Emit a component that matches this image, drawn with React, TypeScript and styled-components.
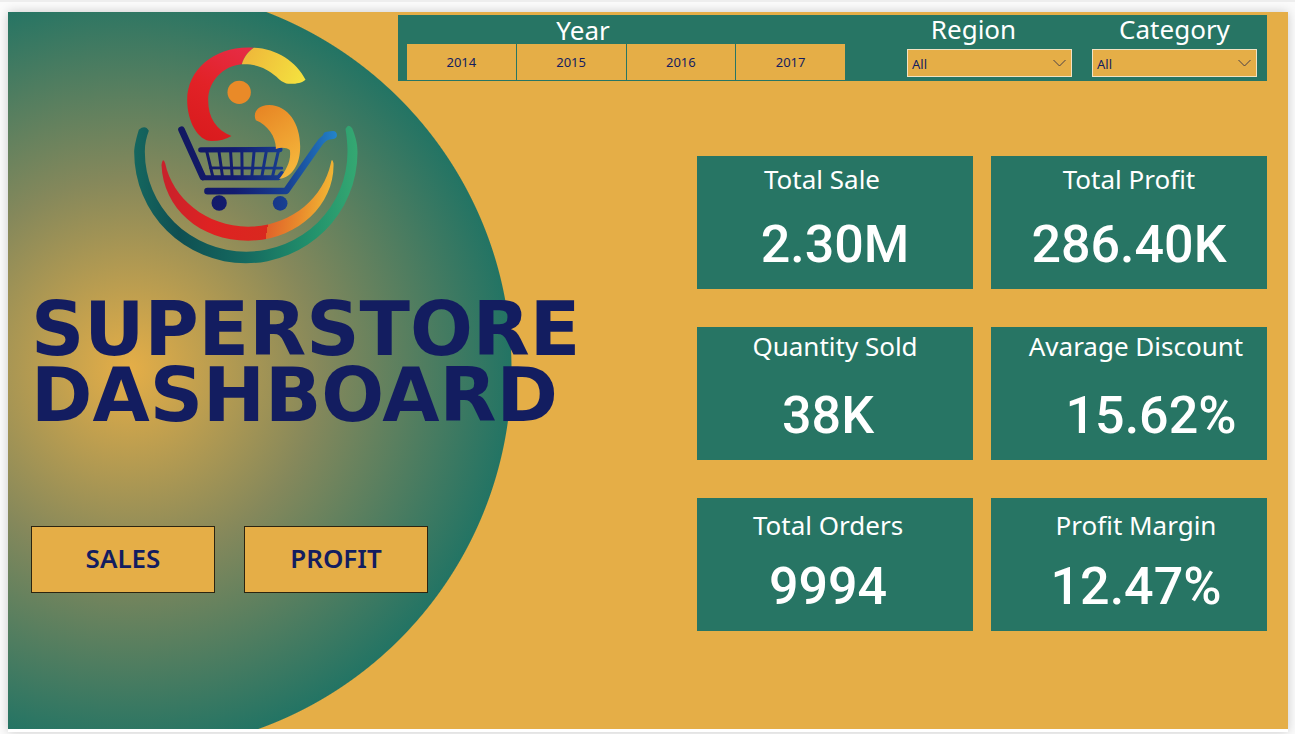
import React, { useState } from "react";
import styled, { createGlobalStyle } from "styled-components";

const amber = "#e5ae47";
const green = "#277564";
const navy = "#131d60";

const GlobalStyle = createGlobalStyle`
  *, *::before, *::after { box-sizing: border-box; }
  body {
    margin: 0;
    background: #fbfbfb;
    font-family: "Noto Sans", "Open Sans", sans-serif;
  }
`;

const Page = styled.div`
  display: flex;
  flex-direction: column;
  min-height: 100vh;
  padding: 10px 7px 2px 8px;
  border-top: 2px solid #eeeeee;
`;

const Report = styled.main`
  flex: 1;
  display: flex;
  padding-bottom: 3px;
  background: #ffffff;
  box-shadow: 0 0 10px rgba(0, 0, 0, 0.2);
`;

const Canvas = styled.div`
  flex: 1;
  display: grid;
  grid-template-columns: 390fr 299fr 570fr;
  grid-template-rows: auto 1fr;
  padding: 3px 21px 0 0;
  background: radial-gradient(
    circle at 121px 357px,
    ${amber} 0,
    #85885b 191px,
    #237464 382px,
    ${amber} 383px
  );
`;

const FilterBar = styled.header`
  grid-column: 2 / 4;
  grid-row: 1;
  display: flex;
  gap: 20px;
  height: 66px;
  padding: 0 10px 0 9px;
  background: ${green};
`;

const YearSlicer = styled.div`
  flex: 0 1 438px;
  display: flex;
  flex-direction: column;
  justify-content: flex-end;
  margin-right: auto;
  padding-bottom: 1px;
`;

const FilterLabel = styled.label`
  font-size: 26px;
  line-height: 28px;
  text-align: center;
  color: #ffffff;
`;

const YearLabel = styled(FilterLabel).attrs({ as: "span" })`
  padding-right: 86px;
`;

const YearList = styled.div`
  display: grid;
  grid-template-columns: repeat(4, 1fr);
  gap: 1px;
`;

const YearButton = styled.button`
  height: 36px;
  padding: 0;
  border: 0;
  background: ${amber};
  color: ${navy};
  font: 13px "Noto Sans", sans-serif;
  cursor: pointer;
`;

const DropdownFilter = styled.div`
  flex: 0 1 165px;
  display: flex;
  flex-direction: column;
  gap: 6px;
`;

const RegionLabel = styled(FilterLabel)`
  padding-right: 32px;
`;

const SelectBox = styled.div`
  position: relative;
  display: flex;
`;

const Select = styled.select`
  flex: 1;
  height: 28px;
  padding: 2px 24px 0 4px;
  border: 1px solid #f3e3c2;
  border-radius: 0;
  appearance: none;
  background: ${amber};
  color: ${navy};
  font: 13px "Noto Sans", sans-serif;
`;

const Chevron = styled.svg`
  position: absolute;
  top: 10px;
  right: 6px;
  width: 13px;
  height: 8px;
  pointer-events: none;
`;

const Hero = styled.section`
  grid-column: 1 / 3;
  grid-row: 1 / 3;
  display: flex;
  flex-direction: column;
  align-items: flex-start;
  padding: 30px 0 0 23px;
`;

const Logo = styled.svg`
  width: 227px;
  height: 220px;
  margin-left: 102px;
`;

const Title = styled.h1`
  margin: 31px 0 0;
  font: bold 74px/66px "DejaVu Sans", sans-serif;
  color: ${navy};
`;

const PageNav = styled.nav`
  display: flex;
  gap: 29px;
  margin-top: 98px;
`;

const NavButton = styled.button`
  width: 184px;
  height: 67px;
  padding: 0 0 4px;
  border: 1px solid #2b2410;
  background: ${amber};
  color: ${navy};
  font: 600 26px "Noto Sans", sans-serif;
  cursor: pointer;
`;

const Cards = styled.section`
  grid-column: 3;
  grid-row: 2;
  align-content: start;
  display: grid;
  grid-template-columns: 1fr 1fr;
  grid-auto-rows: minmax(133px, auto);
  gap: 38px 18px;
  padding-top: 75px;
`;

const Card = styled.article<{ $top: number }>`
  display: flex;
  flex-direction: column;
  justify-content: space-between;
  padding: ${(p) => p.$top}px 0 14px;
  background: ${green};
  color: #ffffff;
  text-align: center;
  white-space: nowrap;
`;

/* A positive lean moves the centred text right, a negative one left. */
const leanPadding = (lean: number) =>
  lean < 0 ? `0 ${-lean}px 0 0` : `0 0 0 ${lean}px`;

const CardTitle = styled.h2<{ $lean: number }>`
  margin: 0;
  padding: ${(p) => leanPadding(p.$lean)};
  font-size: 26px;
  font-weight: 400;
  line-height: 32px;
`;

const CardValue = styled.p<{ $lean: number }>`
  margin: 0;
  padding: ${(p) => leanPadding(p.$lean)};
  font: 500 52px/60px Roboto, sans-serif;
`;

const years = ["2014", "2015", "2016", "2017"];
const regions = ["All", "Central", "East", "South", "West"];
const categories = ["All", "Furniture", "Office Supplies", "Technology"];

const metrics = [
  { title: "Total Sale", value: "2.30M", top: 7, titleLean: -26, valueLean: 0 },
  { title: "Total Profit", value: "286.40K", top: 7, titleLean: 0, valueLean: 0 },
  { title: "Quantity Sold", value: "38K", top: 3, titleLean: 0, valueLean: -14 },
  { title: "Avarage Discount", value: "15.62%", top: 3, titleLean: 14, valueLean: 44 },
  { title: "Total Orders", value: "9994", top: 11, titleLean: -14, valueLean: -14 },
  { title: "Profit Margin", value: "12.47%", top: 11, titleLean: 14, valueLean: 14 },
];

function CartLogo() {
  return (
    <Logo viewBox="40 30 680 660" role="img" aria-label="Superstore logo">
      <defs>
        <linearGradient id="ring" gradientUnits="userSpaceOnUse" x1="43" y1="0" x2="713" y2="0">
          <stop offset="0" stopColor="#15675f" />
          <stop offset="0.2" stopColor="#0f4f52" />
          <stop offset="0.5" stopColor="#156a60" />
          <stop offset="0.8" stopColor="#22926c" />
          <stop offset="1" stopColor="#35a872" />
        </linearGradient>
        <linearGradient id="smile" gradientUnits="userSpaceOnUse" x1="125" y1="480" x2="641" y2="560">
          <stop offset="0" stopColor="#c9222b" />
          <stop offset="0.3" stopColor="#de2222" />
          <stop offset="0.63" stopColor="#d9281f" />
          <stop offset="0.63" stopColor="#e0632a" />
          <stop offset="0.8" stopColor="#e98a2c" />
          <stop offset="1" stopColor="#f3c136" />
        </linearGradient>
        <linearGradient id="red" gradientUnits="userSpaceOnUse" x1="380" y1="40" x2="240" y2="310">
          <stop offset="0" stopColor="#e62c45" />
          <stop offset="0.5" stopColor="#e22227" />
          <stop offset="1" stopColor="#d91b1d" />
        </linearGradient>
        <linearGradient id="yellow" gradientUnits="userSpaceOnUse" x1="370" y1="50" x2="550" y2="140">
          <stop offset="0" stopColor="#eeb63a" />
          <stop offset="1" stopColor="#f4e23f" />
        </linearGradient>
        <linearGradient id="orange" gradientUnits="userSpaceOnUse" x1="410" y1="220" x2="540" y2="400">
          <stop offset="0" stopColor="#e78524" />
          <stop offset="1" stopColor="#f5b83c" />
        </linearGradient>
        <linearGradient id="cart" gradientUnits="userSpaceOnUse" x1="180" y1="0" x2="650" y2="0">
          <stop offset="0" stopColor="#121861" />
          <stop offset="0.35" stopColor="#131c70" />
          <stop offset="0.7" stopColor="#184294" />
          <stop offset="1" stopColor="#2384c9" />
        </linearGradient>
      </defs>
      <path
        fill="url(#ring)"
        d="M57 284C46 320 43 340 43 352A335 333 0 0 0 713 352C713 325 707 305 697 280Q686 264 677 282C681 305 683 330 683 350A304 300 0 0 1 75 350C75 325 80 305 87 287Q76 268 57 284Z"
      />
      <path
        fill="url(#smile)"
        d="M125 390C130 520 240 617 385 617C530 617 645 510 641 385Q636 365 633 385C610 492 510 575 385 575C260 575 158 490 136 385Q129 365 125 390Z"
      />
      <path
        fill="url(#red)"
        d="M402 38C290 30 202 100 202 195C202 260 235 318 275 318C300 318 320 312 335 303C290 285 265 250 265 195C265 140 310 92 366 88C372 66 385 50 402 38Z"
      />
      <path
        fill="url(#yellow)"
        d="M402 38C470 40 530 80 557 134C545 145 525 147 505 146C490 144 480 135 470 125C440 100 410 86 366 88C372 66 385 50 402 38Z"
      />
      <circle cx="358" cy="172" r="35" fill="#e98a28" />
      <g fill="none" stroke="url(#cart)" strokeLinecap="round" strokeLinejoin="round">
        <path strokeWidth="20" d="M185 284L249 426" />
        <path strokeWidth="15" d="M249 428H476L486 416" />
        <path strokeWidth="16" d="M243 344.500L480 343.500" />
        <path strokeWidth="8" d="M272 398.500L486 399.500" />
        <path
          strokeWidth="9"
          d="M260 346L279 425M297 346L308 425M332 346L337 425M366 346L367 425M403 346L396 425M440 346L426 425M476 346L458 425"
        />
        <path strokeWidth="20" d="M263 468.500L499 467.500L592 335Q612 301 640 300" />
        <path strokeWidth="24" d="M622 302L639 300" />
      </g>
      <g fill="url(#cart)">
        <circle cx="298" cy="504" r="23" />
        <circle cx="481" cy="505" r="22" />
      </g>
      <path
        fill="url(#orange)"
        d="M408 256C398 235 412 210 448 210C505 212 541 265 541 335C541 385 520 425 478 432C500 405 515 375 510 345C500 338 485 336 468 342C470 310 445 270 408 256Z"
      />
    </Logo>
  );
}

function Dropdown({ id, options }: { id: string; options: string[] }) {
  return (
    <SelectBox>
      <Select id={id}>
        {options.map((option) => (
          <option key={option}>{option}</option>
        ))}
      </Select>
      <Chevron viewBox="0 0 13 8" aria-hidden="true">
        <path d="M0.500 1L6.500 7L12.500 1" fill="none" stroke="#4a4148" />
      </Chevron>
    </SelectBox>
  );
}

export default function App() {
  const [year, setYear] = useState<string | null>(null);

  return (
    <>
      <GlobalStyle />
      <Page>
        <Report>
          <Canvas>
            <Hero>
              <CartLogo />
              <Title>
                SUPERSTORE
                <br />
                DASHBOARD
              </Title>
              <PageNav>
                <NavButton type="button">SALES</NavButton>
                <NavButton type="button">PROFIT</NavButton>
              </PageNav>
            </Hero>
            <FilterBar>
              <YearSlicer role="group" aria-labelledby="year-label">
                <YearLabel id="year-label">Year</YearLabel>
                <YearList>
                  {years.map((y) => (
                    <YearButton
                      key={y}
                      type="button"
                      aria-pressed={year === y}
                      onClick={() => setYear(year === y ? null : y)}
                    >
                      {y}
                    </YearButton>
                  ))}
                </YearList>
              </YearSlicer>
              <DropdownFilter>
                <RegionLabel htmlFor="region">Region</RegionLabel>
                <Dropdown id="region" options={regions} />
              </DropdownFilter>
              <DropdownFilter>
                <FilterLabel htmlFor="category">Category</FilterLabel>
                <Dropdown id="category" options={categories} />
              </DropdownFilter>
            </FilterBar>
            <Cards>
              {metrics.map((m) => (
                <Card key={m.title} $top={m.top}>
                  <CardTitle $lean={m.titleLean}>{m.title}</CardTitle>
                  <CardValue $lean={m.valueLean}>{m.value}</CardValue>
                </Card>
              ))}
            </Cards>
          </Canvas>
        </Report>
      </Page>
    </>
  );
}
